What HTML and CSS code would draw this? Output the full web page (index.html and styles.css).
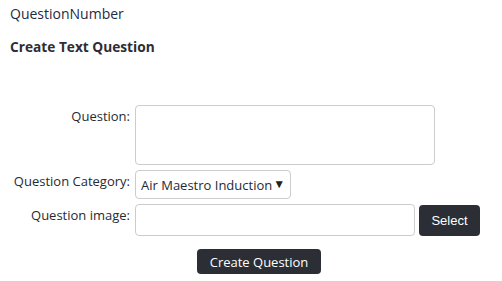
FILE: index.html
```html
<!DOCTYPE html>
<html lang="en">
<head>
  <meta charset="UTF-8" />
  <title>Create Text Question</title>
  <link rel="stylesheet" href="styles.css">
</head>
<body>
  <header class="page-head">
    <h1 class="q-number">QuestionNumber</h1>
    <h2 class="q-title">Create Text Question</h2>
  </header>

  <form class="q-form">
    <div class="form-row">
      <label for="question">Question:</label>
      <textarea id="question" class="q-text"></textarea>
    </div>

    <div class="form-row">
      <label for="category">Question Category:</label>
      <div class="q-select">
        <span>Air Maestro Induction</span>
        <span class="caret">&#9660;</span>
      </div>
    </div>

    <div class="form-row">
      <label for="image">Question image:</label>
      <div class="file-group">
        <input id="image" class="q-input" type="text">
        <button type="button" class="btn btn-select">Select</button>
      </div>
    </div>

    <div class="form-actions">
      <button type="submit" class="btn btn-create">Create Question</button>
    </div>
  </form>
</body>
</html>
```

FILE: styles.css
```css
* {
  margin: 0;
  padding: 0;
  box-sizing: border-box;
}

body {
  font-family: 'Open Sans', sans-serif;
  font-size: 13px;
  color: #262a33;
  background-color: #fff;
  padding: 5px 10px;
}

.page-head {
  margin-bottom: 48px;
}

.q-number {
  font-size: 14px;
  font-weight: 400;
  color: #1f2a44;
  line-height: 18px;
  margin-bottom: 14px;
}

.q-title {
  font-size: 13.7px;
  font-weight: 700;
  color: #2d2d33;
  line-height: 20px;
}

.form-row {
  display: grid;
  grid-template-columns: 120px auto;
  column-gap: 5px;
  align-items: start;
  margin-bottom: 5px;
}

.form-row label {
  text-align: right;
  padding-top: 2px;
  line-height: 18px;
}

.q-text {
  width: 300px;
  height: 60px;
  border: 1px solid #ccc;
  border-radius: 4px;
  resize: none;
  font-family: inherit;
}

.q-select {
  display: inline-flex;
  align-items: center;
  width: 156px;
  height: 29px;
  padding: 0 5px;
  border: 1px solid #ccc;
  border-radius: 4px;
  font-size: 13px;
  white-space: nowrap;
}

.caret {
  font-size: 12px;
  margin-left: 1px;
  margin-top: -2px;
  color: #222;
}

.file-group {
  display: flex;
  align-items: center;
  gap: 4px;
}

.q-input {
  width: 280px;
  height: 32px;
  border: 1px solid #ccc;
  border-radius: 4px;
}

.btn {
  background-color: #2b2e35;
  color: #fff;
  border: none;
  border-radius: 4px;
  cursor: pointer;
}

.btn-select {
  width: 61px;
  height: 31px;
  font-family: 'Liberation Sans', Arial, sans-serif;
  font-size: 13px;
}

.form-actions {
  display: flex;
  justify-content: center;
  padding-top: 8px;
  padding-left: 16px;
}

.btn-create {
  width: 124px;
  height: 25px;
  font-family: 'Open Sans', sans-serif;
  font-size: 13px;
}
```
